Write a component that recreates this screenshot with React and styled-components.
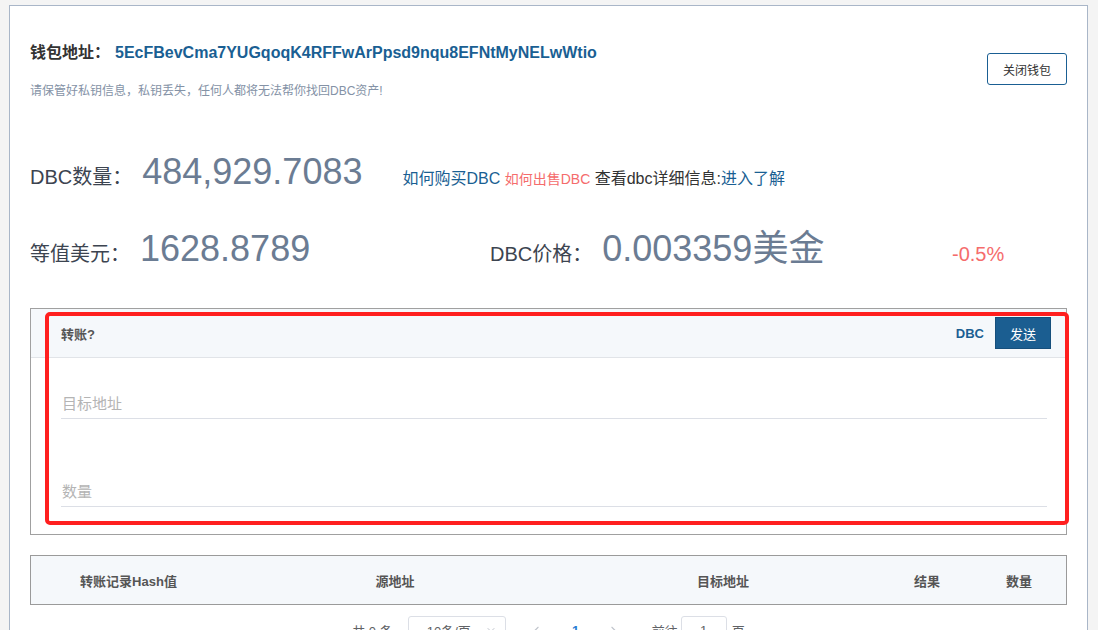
import React from "react";
import styled, { createGlobalStyle } from "styled-components";
import { ChevronLeft, ChevronRight, ChevronDown } from "lucide-react";

const GlobalStyle = createGlobalStyle`
  body {
    margin: 0;
    background: #f4f4f4;
    font-family: "Liberation Sans", "Noto Sans CJK SC", sans-serif;
    color: #333;
  }
  * { box-sizing: border-box; }
`;

const Page = styled.div`
  padding: 5px 10px 0 9px;
`;

const Panel = styled.div`
  background: #fff;
  border: 1px solid #a9b6c8;
  padding: 37px 20px 40px 20px;
`;

const Header = styled.div`
  display: flex;
  justify-content: space-between;
  align-items: flex-start;
`;

const AddressLine = styled.div`
  font-size: 16px;
  font-weight: bold;
  line-height: 20px;
  color: #333;
`;

const AddressValue = styled.span`
  color: #1a5f93;
  margin-left: 5px;
`;

const Warning = styled.div`
  margin-top: 20px;
  font-size: 12px;
  line-height: 16px;
  color: #8492a6;
`;

const OutlineButton = styled.button`
  margin-top: 10px;
  width: 80px;
  height: 32px;
  border: 1px solid #1a5f93;
  border-radius: 3px;
  background: #fff;
  font-family: inherit;
  font-size: 12px;
  color: #333;
  cursor: pointer;
`;

const StatRow = styled.div`
  display: flex;
  align-items: baseline;
  margin-top: 53px;
`;

const StatGrid = styled.div`
  display: grid;
  grid-template-columns: 460px 462px 1fr;
  align-items: baseline;
  margin-top: 37px;
`;

const Stat = styled.div`
  display: flex;
  align-items: baseline;
`;

const StatLabel = styled.span`
  font-size: 20px;
  color: #3c4450;
  margin-right: 10px;
`;

const StatValue = styled.span`
  font-size: 36px;
  line-height: 40px;
  color: #6b7c93;
`;

const Links = styled.div`
  margin-left: 40px;
  font-size: 16px;
  color: #333;
`;

const Link = styled.a`
  color: ${p => (p.$red ? "#f56c6c" : "#1a5f93")};
  font-size: ${p => (p.$red ? "14px" : "16px")};
  text-decoration: none;
`;

const Change = styled.span`
  font-size: 20px;
  color: #f56c6c;
`;

const TransferBox = styled.div`
  position: relative;
  margin-top: 39px;
  border: 1px solid #a0a0a0;
`;

const TransferHead = styled.div`
  display: flex;
  align-items: center;
  height: 49px;
  padding: 0 15px 0 30px;
  background: #f5f8fb;
  border-bottom: 1px solid #e1e4e8;
`;

const HeadTitle = styled.span`
  flex: 1;
  font-size: 13px;
  font-weight: bold;
  color: #555;
`;

const Unit = styled.span`
  font-size: 13px;
  font-weight: bold;
  color: #1a5f93;
  margin-right: 11px;
`;

const SendButton = styled.button`
  width: 56px;
  height: 32px;
  border: 1px solid #164f7c;
  background: #1b5e91;
  color: #fff;
  font-family: inherit;
  font-size: 13px;
  cursor: pointer;
`;

const TransferBody = styled.div`
  padding: 30px 19px 27px 30px;
`;

const Field = styled.input`
  display: block;
  width: 100%;
  height: 31px;
  border: none;
  border-bottom: 1px solid #dcdfe6;
  padding: 0 1px;
  font-family: inherit;
  font-size: 15px;
  color: #333;
  outline: none;
  margin-top: ${p => p.$gap || 0}px;
  &::placeholder {
    color: #b4b4b4;
  }
`;

const Highlight = styled.div`
  position: absolute;
  left: 14px;
  top: 3px;
  width: 1024px;
  height: 213px;
  border: 4px solid #ff1f1f;
  border-radius: 5px;
  pointer-events: none;
`;

const TableHead = styled.div`
  display: grid;
  grid-template-columns: 195px 338px 318px 90px 1fr;
  align-items: center;
  height: 50px;
  margin-top: 20px;
  border: 1px solid #9a9a9a;
  background: #f5f8fb;
`;

const Th = styled.div`
  text-align: center;
  font-size: 13px;
  font-weight: bold;
  color: #555;
`;

const Pager = styled.div`
  display: flex;
  justify-content: center;
  align-items: center;
  margin-top: 11px;
  font-size: 13px;
  color: #606266;
`;

const Total = styled.span`
  margin-right: 15px;
`;

const SizeSelect = styled.div`
  display: flex;
  align-items: center;
  justify-content: space-between;
  width: 98px;
  height: 28px;
  padding: 0 8px 0 18px;
  border: 1px solid #dcdfe6;
  border-radius: 3px;
  margin-right: 16px;
  color: #606266;
`;

const PageBtn = styled.span`
  display: flex;
  align-items: center;
  justify-content: center;
  width: 30px;
  height: 28px;
  margin-right: ${p => p.$mr || 0}px;
  color: ${p => (p.$active ? "#2a7fd4" : "#c0c4cc")};
  font-weight: ${p => (p.$active ? "bold" : "normal")};
`;

const Jumper = styled.span`
  display: flex;
  align-items: center;
  margin-left: 23px;
`;

const JumpInput = styled.div`
  width: 46px;
  height: 28px;
  margin: 0 5px 0 3px;
  border: 1px solid #dcdfe6;
  border-radius: 3px;
  display: flex;
  align-items: center;
  justify-content: center;
`;

export default function App() {
  return (
    <Page>
      <GlobalStyle />
      <Panel>
        <Header>
          <div>
            <AddressLine>
              钱包地址：
              <AddressValue>5EcFBevCma7YUGqoqK4RFFwArPpsd9nqu8EFNtMyNELwWtio</AddressValue>
            </AddressLine>
            <Warning>请保管好私钥信息，私钥丢失，任何人都将无法帮你找回DBC资产!</Warning>
          </div>
          <OutlineButton>关闭钱包</OutlineButton>
        </Header>

        <StatRow>
          <StatLabel>DBC数量：</StatLabel>
          <StatValue>484,929.7083</StatValue>
          <Links>
            <Link href="#">如何购买DBC</Link> <Link href="#" $red>如何出售DBC</Link> 查看dbc详细信息:
            <Link href="#">进入了解</Link>
          </Links>
        </StatRow>

        <StatGrid>
          <Stat>
            <StatLabel>等值美元：</StatLabel>
            <StatValue>1628.8789</StatValue>
          </Stat>
          <Stat>
            <StatLabel>DBC价格：</StatLabel>
            <StatValue>0.003359美金</StatValue>
          </Stat>
          <Stat>
            <Change>-0.5%</Change>
          </Stat>
        </StatGrid>

        <TransferBox>
          <TransferHead>
            <HeadTitle>转账?</HeadTitle>
            <Unit>DBC</Unit>
            <SendButton>发送</SendButton>
          </TransferHead>
          <TransferBody>
            <Field placeholder="目标地址" />
            <Field placeholder="数量" $gap={57} />
          </TransferBody>
          <Highlight />
        </TransferBox>

        <TableHead>
          <Th>转账记录Hash值</Th>
          <Th>源地址</Th>
          <Th>目标地址</Th>
          <Th>结果</Th>
          <Th>数量</Th>
        </TableHead>

        <Pager>
          <Total>共 0 条</Total>
          <SizeSelect>
            10条/页
            <ChevronDown size={12} color="#c0c4cc" />
          </SizeSelect>
          <PageBtn $mr={9}>
            <ChevronLeft size={13} />
          </PageBtn>
          <PageBtn $active $mr={8}>1</PageBtn>
          <PageBtn>
            <ChevronRight size={13} />
          </PageBtn>
          <Jumper>
            前往
            <JumpInput>1</JumpInput>
            页
          </Jumper>
        </Pager>
      </Panel>
    </Page>
  );
}
